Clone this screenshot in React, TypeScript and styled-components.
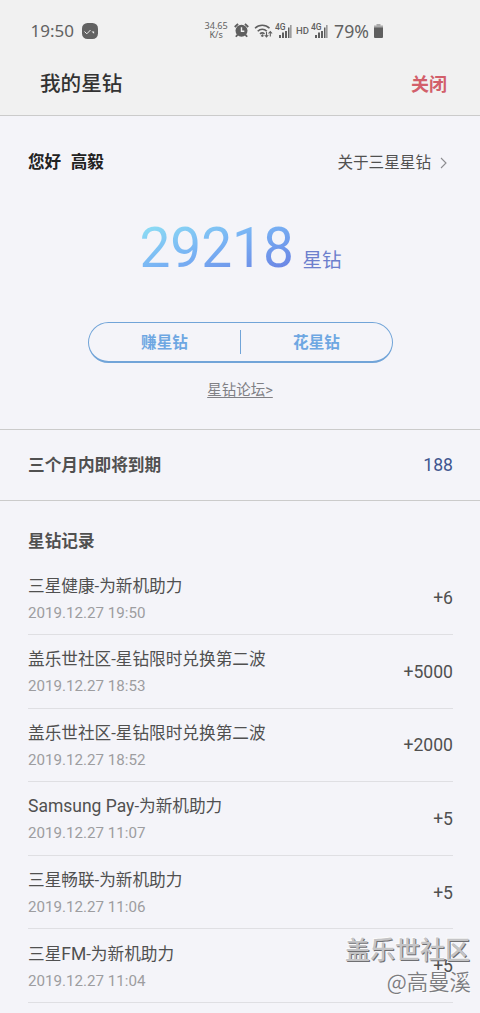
import React from "react";
import styled, { createGlobalStyle } from "styled-components";

const Global = createGlobalStyle`
  * { box-sizing: border-box; }
  html, body { margin: 0; padding: 0; background: #f4f4f9; }
  body { font-family: Roboto, "Noto Sans CJK SC", sans-serif; color: #505050; }
`;

const Screen = styled.main`
  position: relative;
  width: 480px;
  height: 1013px;
  overflow: hidden;
  background: #f4f4f9;
`;

const Top = styled.header`
  height: 116px;
  background: #f1f1f1;
  border-bottom: 1px solid #cbcbcb;
`;

const StatusBar = styled.div`
  display: flex;
  justify-content: space-between;
  height: 54px;
  padding: 20px 97px 0 30px;
  font-family: "Noto Sans", sans-serif;
  color: #626262;
`;

const StatusGroup = styled.div`
  display: flex;
  align-items: center;
  height: 21px;
`;

const StatusText = styled.span<{ $size: number; $ml?: number }>`
  margin-left: ${(p) => p.$ml ?? 0}px;
  font-size: ${(p) => p.$size}px;
  line-height: 20px;
`;

const Speed = styled.div`
  display: flex;
  flex-direction: column;
  align-items: center;
  width: 24px;
  font-size: 9.1px;
  line-height: 8.5px;
  white-space: nowrap;
  margin-right: 6px;
`;

const Hd = styled.span`
  font: 500 9.5px/12px Roboto, sans-serif;
  margin: 0 2px 0 4px;
`;

const Glyph = styled.svg<{ $ml?: number }>`
  display: block;
  flex: none;
  margin-left: ${(p) => p.$ml ?? 0}px;
`;

const TitleBar = styled.div`
  display: flex;
  justify-content: space-between;
  align-items: center;
  height: 60px;
  padding: 0 33px 0 40px;
`;

const PageTitle = styled.h1`
  margin: 0;
  font-size: 20.6px;
  font-weight: 500;
  line-height: 30px;
  color: #333;
`;

const Close = styled.span`
  padding-top: 1px;
  font-size: 18px;
  font-weight: 700;
  line-height: 30px;
  color: #d25f6a;
`;

const Summary = styled.section`
  display: flex;
  flex-direction: column;
  align-items: center;
  height: 314px;
  border-bottom: 1px solid #cbcbcb;
`;

const Greeting = styled.div`
  display: flex;
  align-self: stretch;
  justify-content: space-between;
  align-items: center;
  height: 24px;
  margin-top: 35px;
  padding: 0 33px 0 28px;
`;

const Hello = styled.span`
  font-size: 16.6px;
  font-weight: 700;
  line-height: 24px;
  color: #222;
  white-space: pre;
  word-spacing: 0.6px;
`;

const About = styled.a`
  display: flex;
  align-items: center;
  font-size: 15.6px;
  line-height: 24px;
  color: #505050;
`;

const Balance = styled.div`
  display: flex;
  align-items: baseline;
  height: 66px;
  margin-top: 40px;
  padding-left: 1px;
`;

const Total = styled.span`
  font-size: 55px;
  line-height: 66px;
  color: transparent;
  background: linear-gradient(160deg, #8ee0f4 8%, #78b2f4 48%, #6a84e4 88%);
  background-clip: text;
  -webkit-background-clip: text;
`;

const Unit = styled.span`
  margin-left: 8.5px;
  font-size: 19.6px;
  line-height: 30px;
  color: #6c7fcd;
`;

const Actions = styled.div`
  display: flex;
  align-items: center;
  width: 305px;
  height: 41px;
  margin-top: 41px;
  border: 1.5px solid #71a4d8;
  border-bottom-width: 2px;
  border-radius: 21px;
`;

const Action = styled.a`
  display: flex;
  flex: 1;
  align-items: center;
  justify-content: center;
  height: 24px;
  padding: 1px 0 0 1px;
  font-size: 15.6px;
  font-weight: 700;
  line-height: 24px;
  color: #6ea7e2;
  & + & { border-left: 1px solid #71a4d8; }
`;

const Forum = styled.a`
  margin-top: 16px;
  font-size: 14.5px;
  line-height: 24px;
  color: #808085;
  text-decoration: underline;
  text-underline-offset: 2px;
  text-decoration-thickness: 1px;
`;

const Expiring = styled.section`
  display: flex;
  justify-content: space-between;
  align-items: center;
  height: 71px;
  padding: 0 27px 0 28px;
  border-bottom: 1px solid #cbcbcb;
`;

const Heading = styled.h2`
  margin: 0;
  padding-top: 2px;
  font-size: 16.65px;
  font-weight: 700;
  line-height: 24px;
  color: #505050;
`;

const Amount = styled.span<{ $accent?: boolean }>`
  font-size: 17.6px;
  line-height: 24px;
  color: ${(p) => (p.$accent ? "#40568f" : "#505050")};
`;

const History = styled.section`
  padding: 27px 27px 0 28px;
`;

const Records = styled.ul`
  list-style: none;
  margin: 7.4px 0 0;
  padding: 0;
`;

const Record = styled.li`
  display: flex;
  justify-content: space-between;
  align-items: center;
  height: 73.6px;
  padding-top: 1px;
  border-bottom: 1px solid #dfdfe3;
`;

const RecordText = styled.div`
  padding-top: 3px;
`;

const RecordName = styled.div`
  font-size: 16.65px;
  line-height: 26px;
  color: #505050;
`;

const Latin = styled.span`
  font-size: 17.5px;
  line-height: 1;
`;

const RecordTime = styled.div`
  font-size: 15.15px;
  line-height: 26px;
  color: #9d9da0;
`;

const Watermark = styled.div`
  position: absolute;
  right: 9px;
  bottom: 16px;
  text-align: right;
  font-family: "Noto Sans CJK SC", sans-serif;
  pointer-events: none;
`;

const Community = styled.div`
  padding-right: 1px;
  font-size: 25px;
  font-weight: 500;
  line-height: 34px;
  color: #c4c4c6;
  text-shadow: 1px 1px 0 #6f6f72, -1px -1px 0 #fbfbfb;
`;

const Author = styled.div`
  font-size: 21.4px;
  font-weight: 350;
  line-height: 32px;
  color: #7c7c80;
  text-shadow: 1px 1px 0 #fbfbfb;
`;

const records = [
  { name: "三星健康-为新机助力", time: "2019.12.27 19:50", amount: "+6" },
  { name: "盖乐世社区-星钻限时兑换第二波", time: "2019.12.27 18:53", amount: "+5000" },
  { name: "盖乐世社区-星钻限时兑换第二波", time: "2019.12.27 18:52", amount: "+2000" },
  { name: "Samsung Pay-为新机助力", time: "2019.12.27 11:07", amount: "+5" },
  { name: "三星畅联-为新机助力", time: "2019.12.27 11:06", amount: "+5" },
  { name: "三星FM-为新机助力", time: "2019.12.27 11:04", amount: "+5" },
];

const AppBadge = () => (
  <Glyph $ml={8} width="16" height="16" viewBox="0 0 16 16">
    <rect width="16" height="16" rx="5.5" fill="#626262" />
    <path d="M2.5 8.5l2.3 2.3L8.5 7" fill="none" stroke="#f1f1f1" strokeWidth="1" />
    <path d="M9.5 8.6h2.6v2.2z" fill="#f1f1f1" />
  </Glyph>
);

const Alarm = () => (
  <Glyph width="15" height="15" viewBox="0 0 16 16">
    <circle cx="8" cy="8.3" r="6.4" fill="#5f5f5f" />
    <path d="M.8 4.3L4.3 1M15.200 4.3L11.7 1M3.8 12.5L2 14.7M12.2 12.5L14 14.7" stroke="#5f5f5f" strokeWidth="2" />
    <path d="M8 4.500V8.800H11" fill="none" stroke="#f1f1f1" strokeWidth="1.5" />
  </Glyph>
);

const Wifi = () => (
  <Glyph $ml={5} width="19" height="16" viewBox="0 0 19 16">
    <g fill="none" stroke="#5f5f5f" strokeWidth="1.6">
      <path d="M1 5.3C5 1.2 11.5 1.2 15.5 5.3" />
      <path d="M3.7 8.2C6.3 5.5 10.2 5.5 12.8 8.2" />
      <path d="M6 10.8Q8.2 8.9 10.5 10.8" />
    </g>
    <path d="M8.3 11l1.7 1.9-1.7 1.1-1.6-1.1z" fill="#5f5f5f" />
    <path d="M12.5 9v5M10.7 12l1.8 2 1.8-2M16.3 13.5v-5M14.5 10.5l1.8-2 1.8 2" fill="none" stroke="#5f5f5f" strokeWidth="1.1" />
  </Glyph>
);

const MobileSignal = ({ ml }: { ml?: number }) => (
  <Glyph $ml={ml} width="17" height="16" viewBox="0 0 17 16">
    <text x="0" y="7" fontFamily="Roboto, sans-serif" fontSize="8.5" fontWeight="500" fill="#5f5f5f">4G</text>
    <path d="M4 12h2v3H4zM7 9.500h2V15H7zM10 8h2v7h-2zM13 4.500h1.500V15H13z" fill="#5f5f5f" />
    <path d="M15.200 2h1.300v13h-1.300z" fill="#888" />
  </Glyph>
);

const Battery = () => (
  <Glyph $ml={5} width="9" height="14" viewBox="0 0 9 14">
    <path d="M2.5 0h4v1.5H9V4H0V1.5h2.5z" fill="#aaa" />
    <path d="M0 3.5h9V13q0 1-1 1H1q-1 0-1-1z" fill="#5f5f5f" />
  </Glyph>
);

const Chevron = () => (
  <Glyph $ml={9} width="7" height="12" viewBox="0 0 7 12">
    <path d="M1 1l5 5-5 5" fill="none" stroke="#8c8c90" strokeWidth="1.1" />
  </Glyph>
);

const splitLatin = (name: string) =>
  name.split(/([A-Za-z ]+)/).map((part, i) => (i % 2 ? <Latin key={i}>{part}</Latin> : part));

export default function App() {
  return (
    <Screen>
      <Global />
      <Top>
        <StatusBar>
          <StatusGroup>
            <StatusText $size={17} $ml={0.5}>19:50</StatusText>
            <AppBadge />
          </StatusGroup>
          <StatusGroup>
            <Speed>
              <span>34.65</span>
              <span>K/s</span>
            </Speed>
            <Alarm />
            <Wifi />
            <MobileSignal ml={2} />
            <Hd>HD</Hd>
            <MobileSignal />
            <StatusText $size={17.7} $ml={6}>79%</StatusText>
            <Battery />
          </StatusGroup>
        </StatusBar>
        <TitleBar>
          <PageTitle>我的星钻</PageTitle>
          <Close>关闭</Close>
        </TitleBar>
      </Top>

      <Summary>
        <Greeting>
          <Hello>{"您好  高毅"}</Hello>
          <About>关于三星星钻<Chevron /></About>
        </Greeting>
        <Balance>
          <Total>29218</Total>
          <Unit>星钻</Unit>
        </Balance>
        <Actions>
          <Action>赚星钻</Action>
          <Action>花星钻</Action>
        </Actions>
        <Forum>星钻论坛&gt;</Forum>
      </Summary>

      <Expiring>
        <Heading>三个月内即将到期</Heading>
        <Amount $accent>188</Amount>
      </Expiring>

      <History>
        <Heading>星钻记录</Heading>
        <Records>
          {records.map((r) => (
            <Record key={r.time}>
              <RecordText>
                <RecordName>{splitLatin(r.name)}</RecordName>
                <RecordTime>{r.time}</RecordTime>
              </RecordText>
              <Amount>{r.amount}</Amount>
            </Record>
          ))}
        </Records>
      </History>

      <Watermark>
        <Community>盖乐世社区</Community>
        <Author>@高曼溪</Author>
      </Watermark>
    </Screen>
  );
}
